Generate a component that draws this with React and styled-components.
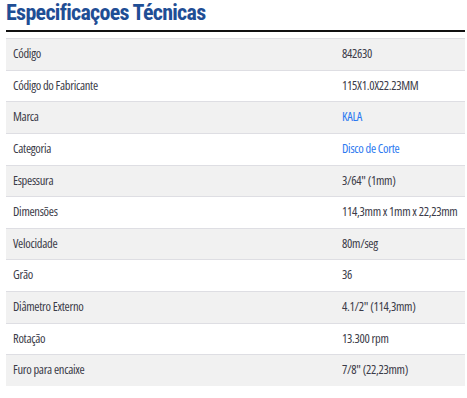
import React from 'react';
import styled, { createGlobalStyle } from 'styled-components';

const GlobalStyle = createGlobalStyle`
  body {
    margin: 0;
    background: #fff;
  }
`;

const Section = styled.section`
  padding: 0 2px 0 6px;
`;

const Title = styled.h2`
  margin: 0;
  height: 29px;
  line-height: 24px;
  padding-top: 1px;
  font-family: "Roboto Condensed", "Liberation Sans", sans-serif;
  font-size: 22px;
  font-weight: 700;
  letter-spacing: -0.7px;
  color: #1f4e95;
  border-bottom: 2px solid #111;
`;

const List = styled.div`
  margin-top: 6px;
  display: flex;
  flex-direction: column;
`;

const Row = styled.div`
  display: grid;
  grid-template-columns: 329px 1fr;
  background: ${({ $shaded }) => ($shaded ? '#f1f1f1' : '#fff')};
  border-top: 1px solid #dedee3;
`;

const Cell = styled.div`
  padding: 6px 7px;
  line-height: 18.64px;
  font-family: "Open Sans", "Roboto Condensed", sans-serif;
  font-stretch: 75%;
  font-size: 12.5px;
  letter-spacing: -0.3px;
  white-space: nowrap;
  color: ${({ $link }) => ($link ? '#2b78f0' : '#3b3b48')};
`;

const specs = [
  ['Código', '842630'],
  ['Código do Fabricante', '115X1.0X22.23MM'],
  ['Marca', 'KALA', true],
  ['Categoria', 'Disco de Corte', true],
  ['Espessura', '3/64" (1mm)'],
  ['Dimensões', '114,3mm x 1mm x 22,23mm'],
  ['Velocidade', '80m/seg'],
  ['Grão', '36'],
  ['Diâmetro Externo', '4.1/2" (114,3mm)'],
  ['Rotação', '13.300 rpm'],
  ['Furo para encaixe', '7/8" (22,23mm)'],
];

export default function App() {
  return (
    <>
      <GlobalStyle />
      <Section>
        <Title>Especificaçoes Técnicas</Title>
        <List>
          {specs.map(([label, value, link], i) => (
            <Row key={label} $shaded={i % 2 === 0}>
              <Cell>{label}</Cell>
              <Cell $link={link}>{value}</Cell>
            </Row>
          ))}
        </List>
      </Section>
    </>
  );
}
